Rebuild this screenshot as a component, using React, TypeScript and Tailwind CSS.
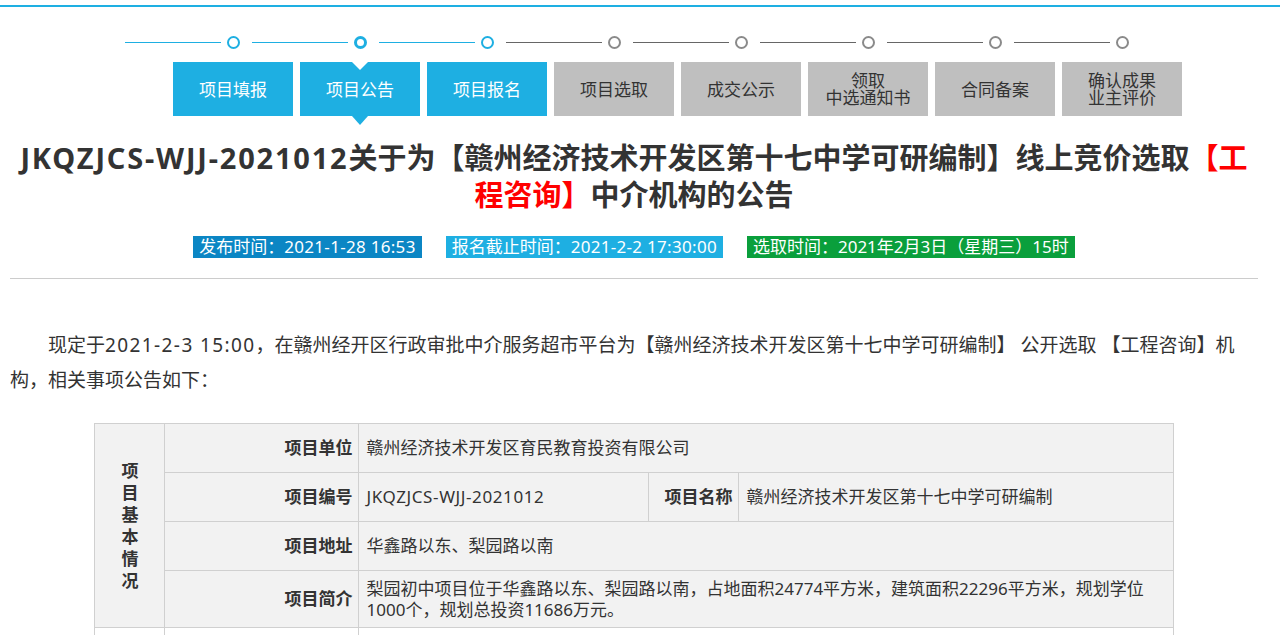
import React from "react";

const steps = [
  { label: ["项目填报"], active: true },
  { label: ["项目公告"], active: true, current: true },
  { label: ["项目报名"], active: true },
  { label: ["项目选取"], active: false },
  { label: ["成交公示"], active: false },
  { label: ["领取", "中选通知书"], active: false },
  { label: ["合同备案"], active: false },
  { label: ["确认成果", "业主评价"], active: false },
];

const font = { fontFamily: '"Noto Sans", "Noto Sans CJK SC", sans-serif' };

export default function App() {
  return (
    <div className="bg-white text-[#333] pt-[5px] w-[1280px] overflow-hidden" style={font}>
      <div className="h-[2px] bg-[#1eafe2]" />

      {/* step indicator */}
      <div className="flex ml-[125px] mt-[29px] h-[13px] items-center">
        {steps.map((s, i) => (
          <div key={i} className="flex items-center w-[127px] shrink-0">
            <div className={`h-px w-[96px] ${s.active ? "bg-[#1eafe2]" : "bg-[#666]"}`} />
            <div className="w-[6px]" />
            <div
              className={`w-[13px] h-[13px] rounded-full bg-white box-border ${
                s.current
                  ? "border-[3px] border-[#1eafe2]"
                  : s.active
                  ? "border-2 border-[#1eafe2]"
                  : "border-2 border-[#8a8a8a]"
              }`}
            />
          </div>
        ))}
      </div>

      <div className="flex ml-[173px] mt-[13px] gap-[7px]">
        {steps.map((s, i) => (
          <div
            key={i}
            className={`relative w-[120px] h-[54px] flex flex-col items-center justify-center text-[17px] leading-[17px] ${
              s.active ? "bg-[#1eafe2] text-white" : "bg-[#bfbfbf] text-[#333]"
            }`}
          >
            {s.label.map((l, j) => (
              <span key={j} className="block h-[17px]">{l}</span>
            ))}
            {s.current && (
              <>
                <div className="absolute top-0 left-1/2 -translate-x-1/2 w-0 h-0 border-l-[8px] border-r-[8px] border-t-[8px] border-l-transparent border-r-transparent border-t-white" />
                <div className="absolute top-full left-1/2 -translate-x-1/2 w-0 h-0 border-l-[8px] border-r-[8px] border-t-[9px] border-l-transparent border-r-transparent border-t-[#1eafe2]" />
              </>
            )}
          </div>
        ))}
      </div>

      <div className="ml-[10px] w-[1248px]">
        <h1 className="mt-[23px] text-center text-[29px] leading-[37px] font-bold text-[#333]">
          <span className="tracking-[1.8px]">JKQZJCS-WJJ-2021012</span>关于为【赣州经济技术开发区第十七中学可研编制】线上竞价选取
          <span className="text-[#ff0000]">【工</span>
          <br />
          <span className="text-[#ff0000]">程咨询】</span>中介机构的公告
        </h1>

        <div className="mt-[23px] flex justify-center gap-[24px] text-[17px] text-white">
          <span className="h-[22px] leading-[22px] px-[6px] bg-[#0b86c4]">发布时间：<span className="tracking-[0.3px]">2021-1-28 16:53</span></span>
          <span className="h-[22px] leading-[22px] px-[6px] bg-[#1eafe2]">报名截止时间：<span className="tracking-[0.3px]">2021-2-2 17:30:00</span></span>
          <span className="h-[22px] leading-[22px] px-[6px] bg-[#0a9f3c]">选取时间：2021年2月3日（星期三）15时</span>
        </div>

        <div className="mt-[20px] border-t border-[#cccccc]" />

        <p className="mt-[49px] text-[19px] leading-[35px] indent-[38px] text-[#333]">
          现定于<span className="tracking-[1.4px]">2021-2-3 15:00</span>，在赣州经开区行政审批中介服务超市平台为【赣州经济技术开发区第十七中学可研编制】 公开选取 【工程咨询】机
          <br />
          构，相关事项公告如下：
        </p>

        <table className="mt-[25px] mx-auto w-[1078px] border-collapse text-[17px] text-[#333] table-fixed">
          <colgroup>
            <col className="w-[70px]" />
            <col className="w-[194px]" />
            <col className="w-[290px]" />
            <col className="w-[90px]" />
            <col className="w-[434px]" />
          </colgroup>
          <tbody className="bg-[#f2f2f2]">
            <tr className="h-[49px]">
              <td rowSpan={4} className="border border-[#d0d0d0] text-center font-bold leading-[22px] align-middle">
                <div className="flex flex-col items-center">
                  {"项目基本情况".split("").map((c, i) => (
                    <span key={i}>{c}</span>
                  ))}
                </div>
              </td>
              <td className="border border-[#d0d0d0] text-right font-bold pr-[6px]">项目单位</td>
              <td colSpan={3} className="border border-[#d0d0d0] pl-[7px]">赣州经济技术开发区育民教育投资有限公司</td>
            </tr>
            <tr className="h-[49px]">
              <td className="border border-[#d0d0d0] text-right font-bold pr-[6px]">项目编号</td>
              <td className="border border-[#d0d0d0] pl-[7px] tracking-[0.6px]">JKQZJCS-WJJ-2021012</td>
              <td className="border border-[#d0d0d0] text-right font-bold pr-[6px]">项目名称</td>
              <td className="border border-[#d0d0d0] pl-[7px]">赣州经济技术开发区第十七中学可研编制</td>
            </tr>
            <tr className="h-[49px]">
              <td className="border border-[#d0d0d0] text-right font-bold pr-[6px]">项目地址</td>
              <td colSpan={3} className="border border-[#d0d0d0] pl-[7px]">华鑫路以东、梨园路以南</td>
            </tr>
            <tr className="h-[57px]">
              <td className="border border-[#d0d0d0] text-right font-bold pr-[6px]">项目简介</td>
              <td colSpan={3} className="border border-[#d0d0d0] pl-[7px] leading-[21px] py-[7px]">
                梨园初中项目位于华鑫路以东、梨园路以南，占地面积24774平方米，建筑面积22296平方米，规划学位
                <br />
                1000个，规划总投资11686万元。
              </td>
            </tr>
            <tr className="h-[49px] bg-white">
              <td className="border border-[#d0d0d0]" />
              <td className="border border-[#d0d0d0]" />
              <td colSpan={3} className="border border-[#d0d0d0]" />
            </tr>
          </tbody>
        </table>
      </div>
    </div>
  );
}
